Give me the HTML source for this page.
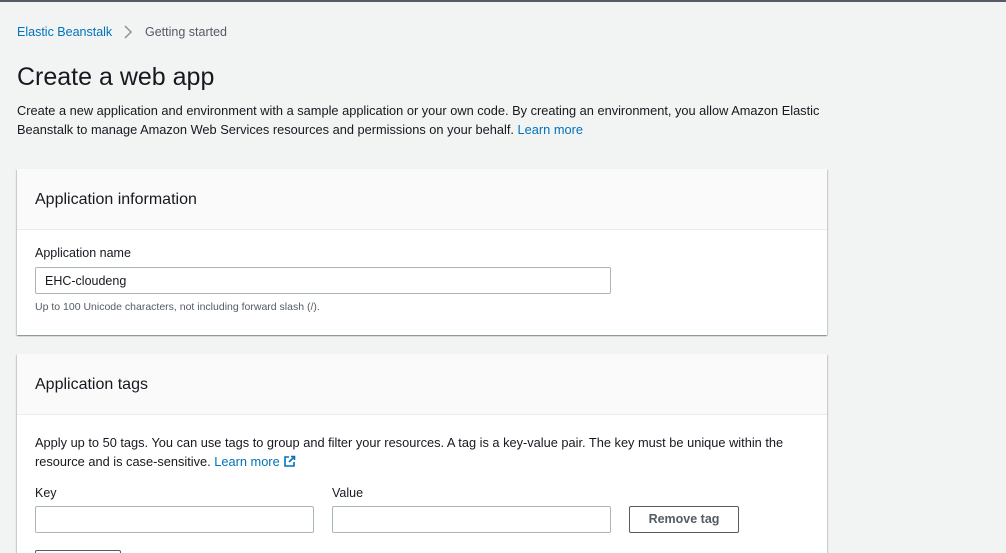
<!DOCTYPE html>
<html><head><meta charset="utf-8"><style>
*{box-sizing:border-box;margin:0;padding:0}
html{width:1006px;height:553px;overflow:hidden}
body{width:1006px;height:553px;overflow:hidden;background:#f2f3f3;font-family:"Liberation Sans",sans-serif;color:#16191f;position:relative}
.a{position:absolute;white-space:nowrap}
a{color:#0073bb;text-decoration:none}
.panel{position:absolute;left:17px;width:810px;background:#fff;box-shadow:0 1px 1px rgba(0,28,36,.3),1px 1px 1px rgba(0,28,36,.15),-1px 1px 1px rgba(0,28,36,.15)}
.ph{height:61px;border-bottom:1px solid #eaeded;background:#fafafa;font-size:16px;padding:22px 18px 0}
.inp{position:absolute;height:27px;border:1px solid #aab7b8;border-radius:2px;background:#fff;font-size:12.5px;padding:6px 9px}
</style></head><body>
<div class="a" style="left:0;top:0;width:1006px;height:2px;background:#545b64"></div>
<div class="a" style="left:17px;top:25px;font-size:12.5px"><a>Elastic Beanstalk</a></div>
<svg class="a" style="left:122px;top:24px" width="12" height="16"><path d="M3 2l6 6-6 6" stroke="#879596" stroke-width="1.5" fill="none"/></svg>
<div class="a" style="left:145px;top:25px;font-size:12.5px;color:#545b64">Getting started</div>
<div class="a" style="left:17px;top:63px;font-size:25px">Create a web app</div>
<div class="a" style="left:17px;top:101px;font-size:12.8px;line-height:19px">Create a new application and environment with a sample application or your own code. By creating an environment, you allow Amazon Elastic<br>Beanstalk to manage Amazon Web Services resources and permissions on your behalf. <a>Learn more</a></div>
<div class="panel" style="top:169px;height:166px">
<div class="ph">Application information</div>
<div class="a" style="left:18px;top:77px;font-size:12.5px">Application name</div>
<div class="inp" style="left:18px;top:98px;width:576px">EHC-cloudeng</div>
<div class="a" style="left:18px;top:132px;font-size:10.5px;color:#545b64">Up to 100 Unicode characters, not including forward slash (/).</div>
</div>
<div class="panel" style="top:354px;height:220px">
<div class="ph">Application tags</div>
<div class="a" style="left:18px;top:79px;font-size:12.8px;line-height:19px">Apply up to 50 tags. You can use tags to group and filter your resources. A tag is a key-value pair. The key must be unique within the<br>resource and is case-sensitive. <a>Learn more <svg width="13" height="13" style="vertical-align:-2px"><path d="M6 2H2v9h9V7M8 1.5h3.5V5M11.5 1.5L6 7" stroke="#0073bb" stroke-width="1.6" fill="none"/></svg></a></div>
<div class="a" style="left:18px;top:132px;font-size:12.5px">Key</div>
<div class="a" style="left:315px;top:132px;font-size:12.5px">Value</div>
<div class="inp" style="left:18px;top:152px;width:279px"></div>
<div class="inp" style="left:315px;top:152px;width:279px"></div>
<div class="a" style="left:612px;top:152px;width:110px;height:27px;border:1px solid #545b64;border-radius:2px;font-size:12.5px;font-weight:bold;color:#545b64;text-align:center;line-height:25px">Remove tag</div>
<div class="a" style="left:18px;top:196px;width:86px;height:27px;border:1px solid #545b64;border-radius:2px"></div>
</div>
</body></html>
